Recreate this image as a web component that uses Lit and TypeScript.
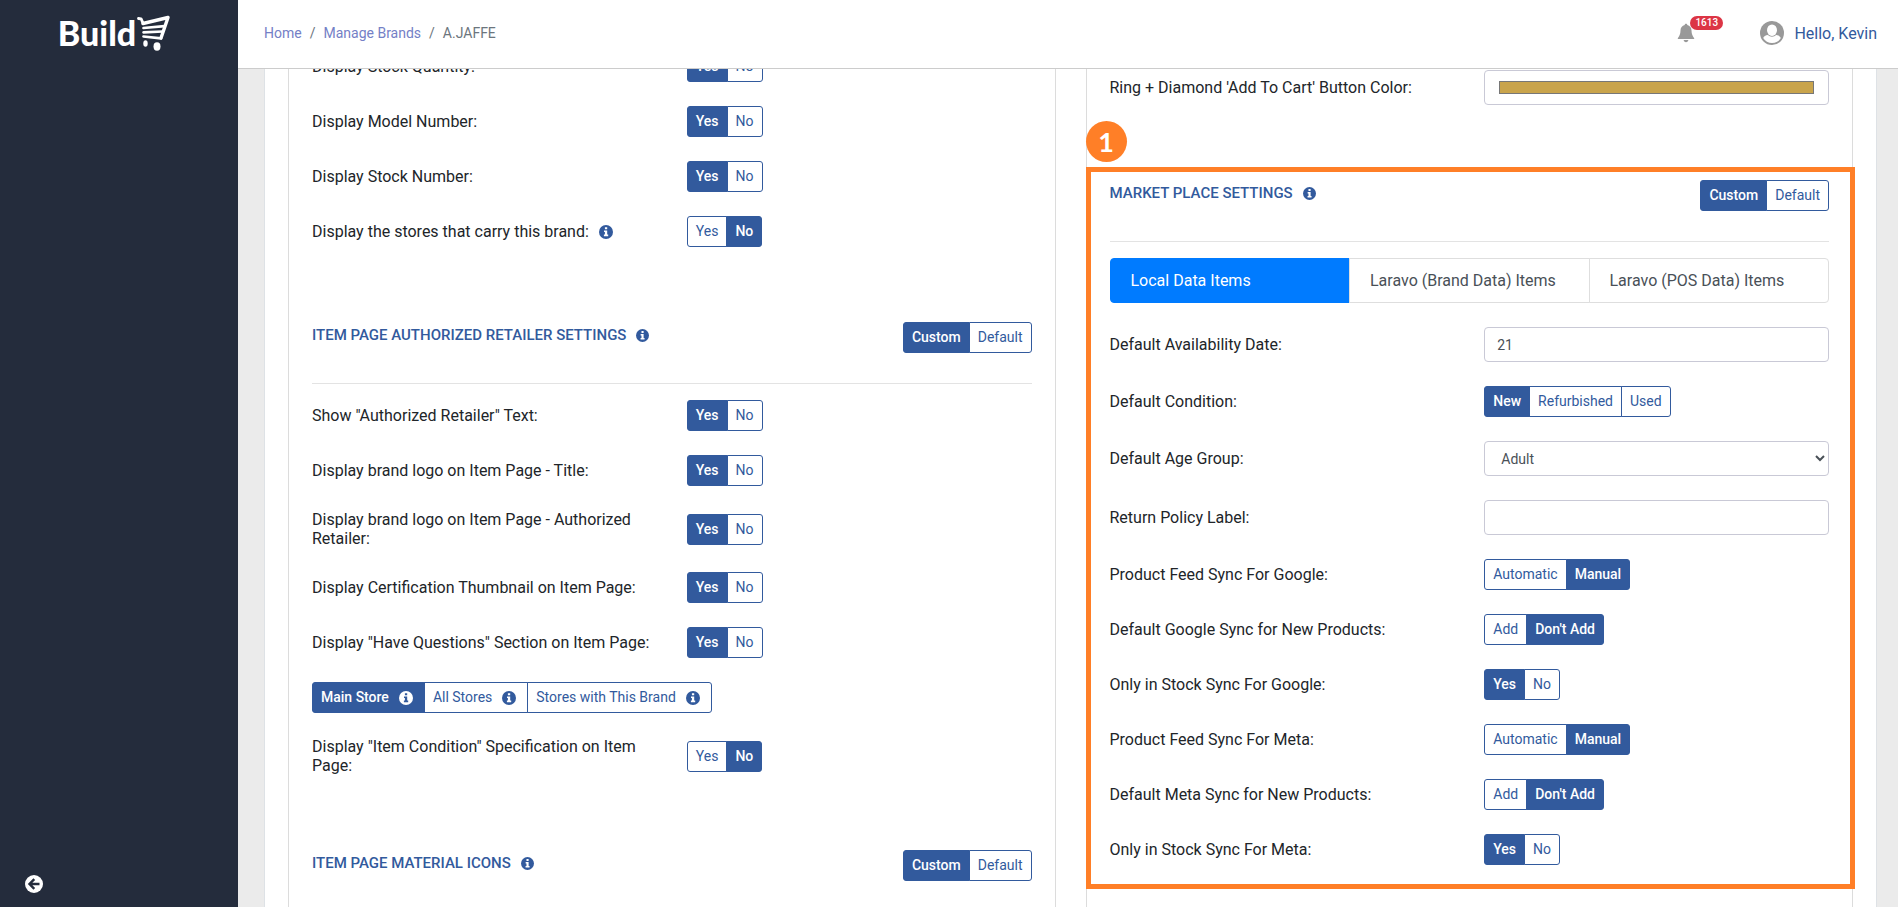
import { LitElement, html, css, nothing } from "lit";
import { customElement, property, state } from "lit/decorators.js";
import { classMap } from "lit/directives/class-map.js";

const infoIcon = html`<svg class="info" viewBox="0 0 14 14" aria-hidden="true">
  <circle cx="7" cy="7" r="7" fill="currentColor"></circle>
  <path class="cut" d="M5.9 2.2h2.3v2H5.9zM5 5.4h3.2v4.2h1v1.7H4.9V9.6h1V7.1H5z"></path>
</svg>`;

const iconStyles = css`
  .info { width: 14px; height: 14px; flex: none; }
  .cut { fill: #fff; }
`;

interface Option { label: string; info?: boolean }

@customElement("option-toggle")
export class OptionToggle extends LitElement {
  @property({ attribute: false }) options: Option[] = [];
  @property() label = "";
  @property({ type: Number }) selected = 0;

  static styles = [iconStyles, css`
    :host { display: flex; }
    .group { display: flex; }
    button {
      display: flex; align-items: center; gap: 10px;
      height: 31px; padding: 0 8px; margin: 0 0 0 -1px;
      border: 1px solid #325a9d; background: #fff; color: #325a9d;
      font: 400 14px/21px Roboto, sans-serif; cursor: pointer; white-space: nowrap;
    }
    button:first-child { margin-left: 0; border-radius: 3px 0 0 3px; }
    button:last-child { border-radius: 0 3px 3px 0; }
    .on { background: #325a9d; color: #fff; font-weight: 500; }
    .on .cut { fill: #325a9d; }
    .with-info { padding-right: 11px; }
  `];

  render() {
    return html`<div class="group" role="group" aria-label=${this.label}>
      ${this.options.map((o, i) => html`<button type="button"
        class=${classMap({ on: i === this.selected, "with-info": !!o.info })}
        aria-pressed=${i === this.selected}
        @click=${() => (this.selected = i)}>${o.label}${o.info ? infoIcon : nothing}</button>`)}
    </div>`;
  }
}

const opts = (...labels: string[]): Option[] => labels.map((label) => ({ label }));
const YES_NO = opts("Yes", "No");
const MODE = opts("Custom", "Default");
const SYNC = opts("Automatic", "Manual");
const ADD = opts("Add", "Don't Add");

@customElement("app-root")
export class AppRoot extends LitElement {
  @state() private tab = 0;

  static styles = [iconStyles, css`
    :host {
      display: grid; grid-template-columns: 238px minmax(0, 1fr);
      height: 100vh; overflow: hidden;
      font: 400 16px/19px Roboto, sans-serif; color: #212529; background: #ebebeb;
    }
    a { text-decoration: none; }
    .sidebar {
      display: flex; flex-direction: column; justify-content: space-between;
      background: #242c3c; color: #fff; padding: 12px 34px 13px 24px;
    }
    .logo { display: flex; align-items: center; justify-content: center; gap: 1px; color: #fff; font: 900 34px/42px Lato, sans-serif; }
    .cart { width: 33px; height: 36px; }
    .collapse { width: 20px; height: 20px; padding: 0; border: 0; background: none; cursor: pointer; }
    .collapse svg { display: block; width: 20px; height: 20px; }
    .body { display: flex; flex-direction: column; min-width: 0; min-height: 0; }
    header {
      display: flex; flex: none; align-items: center; justify-content: space-between;
      height: 66px; padding: 0 21px 2px 26px; background: #fff; border-bottom: 1px solid #ccc;
    }
    .crumbs { display: flex; gap: 8px; font-size: 14px; color: #6c757d; }
    .crumbs a { color: #7480c6; }
    .tools { display: flex; align-items: center; }
    .bell { position: relative; display: block; width: 18px; height: 20px; margin-right: 65px; padding: 0; border: 0; background: none; cursor: pointer; }
    .bell svg { display: block; width: 18px; height: 20px; }
    .count {
      position: absolute; left: 13px; top: -7px; padding: 0 5px; border-radius: 7px;
      background: #dc3545; color: #fff; font: 500 10px/14px Roboto, sans-serif;
    }
    .user { display: flex; align-items: center; gap: 10px; color: #325a9d; }
    .avatar { width: 24px; height: 24px; }
    main { flex: 1; min-height: 0; overflow: hidden; padding: 0 21px 0 26px; }
    .card {
      display: grid; grid-template-columns: repeat(2, minmax(0, 1fr)); gap: 30px;
      margin-top: -18px; padding: 0 23px; background: #fff;
      border: solid #dee2e6; border-width: 0 1px;
    }
    .panel { border: solid #dcdcdc; border-width: 0 1px; padding: 0 23px 60px; display: flex; flex-direction: column; gap: 75px; }
    .panel.late { padding-top: 19px; }
    section { display: flex; flex-direction: column; gap: 24px; }
    .row { display: grid; grid-template-columns: repeat(2, minmax(0, 1fr)); gap: 30px; align-items: center; }
    .label { display: flex; align-items: center; gap: 10px; }
    .head { display: flex; justify-content: space-between; align-items: flex-start; padding-bottom: 30px; margin-bottom: -8px; border-bottom: 1px solid #e3e3e3; }
    h2 { display: flex; align-items: center; gap: 10px; margin: 0; font-size: 15px; font-weight: 500; line-height: 26px; color: #325a9d; text-transform: uppercase; }
    h2 .info { width: 13px; height: 13px; }
    .label .info { color: #325a9d; }
    .field {
      box-sizing: border-box; width: 100%; height: 35px; padding: 6px 12px; margin: 0;
      border: 1px solid #c9c9d6; border-radius: 4px; background: #fff; color: #495057;
      font: 400 14px/21px Roboto, sans-serif;
    }
    .color::-webkit-color-swatch-wrapper { padding: 4px 2px; }
    .tabs { display: flex; }
    .tabs button {
      flex: 1 1 0; height: 45px; padding: 0 20px; border: 1px solid #dedede; margin-left: -1px;
      background: #fff; color: #495057; font: 400 16px/19px Roboto, sans-serif; text-align: left; cursor: pointer;
    }
    .tabs button:first-child { margin-left: 0; border-radius: 4px 0 0 4px; }
    .tabs button:last-child { border-radius: 0 4px 4px 0; }
    .tabs .active { background: #007bff; border-color: #007bff; color: #fff; }
    .market { position: relative; }
    .frame { position: absolute; inset: -13px -26px -24px -24px; border: 5px solid #ff7f27; pointer-events: none; }
    .step {
      position: absolute; left: -24px; top: -59px; width: 41px; height: 41px; border-radius: 50%;
      background: #ff7f27; color: #fff; font: 700 27px/41px Lato, sans-serif; text-align: center;
    }
  `];

  private row(label: string, options: Option[], selected = 0, info = false) {
    return html`<div class="row">
      <div class="label"><span>${label}</span>${info ? infoIcon : nothing}</div>
      <option-toggle .label=${label} .options=${options} .selected=${selected}></option-toggle>
    </div>`;
  }

  private head(title: string) {
    return html`<div class="head">
      <h2><span>${title}</span>${infoIcon}</h2>
      <option-toggle .label=${title} .options=${MODE}></option-toggle>
    </div>`;
  }

  render() {
    return html`
      <aside class="sidebar">
        <a class="logo" href="#"><span>Build</span>
          <svg class="cart" viewBox="0 0 33 36" aria-hidden="true">
            <g fill="none" stroke="#fff" stroke-linecap="round" stroke-linejoin="round">
              <path stroke-width="2.8" d="M1.500 3.500l2.600.3 2 4.600"></path>
              <path stroke-width="3.400" d="M6 8.500l25-6-7 20.500"></path>
              <path stroke-width="2.700" d="M6.500 13l21-1.800M6.500 17.300l19-.8M6.500 21.500l17.500 1.800"></path>
            </g>
            <ellipse cx="8.500" cy="28.500" rx="2.200" ry="3.200" fill="#fff"></ellipse>
            <ellipse cx="20" cy="31.500" rx="3.500" ry="4.200" fill="#fff"></ellipse>
          </svg>
        </a>
        <button class="collapse" type="button" aria-label="Collapse menu">
          <svg viewBox="0 0 20 20"><circle cx="10" cy="10" r="9" fill="#fff"></circle>
            <path d="M15.500 10H6M10.300 5.200L5.500 10l4.800 4.800" fill="none" stroke="#242c3c" stroke-width="2.400"></path></svg>
        </button>
      </aside>
      <div class="body">
        <header>
          <nav class="crumbs" aria-label="Breadcrumb">
            <a href="#">Home</a><span>/</span><a href="#">Manage Brands</a><span>/</span><span>A.JAFFE</span>
          </nav>
          <div class="tools">
            <button class="bell" type="button" aria-label="Notifications">
              <svg viewBox="0 0 18 20"><path fill="#999" d="M9 .8c.8 0 1.300.5 1.300 1.300 2.600.6 4.200 2.700 4.200 5.500 0 4 1.300 5.700 2.700 7.600v.8H.8v-.8c1.400-1.900 2.700-3.600 2.700-7.600 0-2.800 1.600-4.900 4.200-5.500C7.700 1.300 8.200.8 9 .8zM6.700 17h4.600c0 1.300-1 2.200-2.300 2.200S6.700 18.300 6.700 17z"></path></svg>
              <span class="count">1613</span>
            </button>
            <a class="user" href="#">
              <svg class="avatar" viewBox="0 0 24 24"><circle cx="12" cy="12" r="12" fill="#999"></circle>
                <ellipse cx="12" cy="9.200" rx="5" ry="5.800" fill="#fff"></ellipse>
                <path fill="#fff" d="M3.200 17c.8-1.700 2.300-2.600 4.600-2.900a6.300 6.300 0 0 0 8.400 0c2.300.3 3.800 1.200 4.600 2.900A10.200 10.200 0 0 1 3.200 17z"></path></svg>
              <span>Hello, Kevin</span>
            </a>
          </div>
        </header>
        <main>
          <div class="card">
            <div class="panel">
              <section>
                ${this.row("Display Stock Quantity:", YES_NO)}
                ${this.row("Display Model Number:", YES_NO)}
                ${this.row("Display Stock Number:", YES_NO)}
                ${this.row("Display the stores that carry this brand:", YES_NO, 1, true)}
              </section>
              <section>
                ${this.head("Item Page Authorized Retailer Settings")}
                ${this.row('Show "Authorized Retailer" Text:', YES_NO)}
                ${this.row("Display brand logo on Item Page - Title:", YES_NO)}
                ${this.row("Display brand logo on Item Page - Authorized Retailer:", YES_NO)}
                ${this.row("Display Certification Thumbnail on Item Page:", YES_NO)}
                ${this.row('Display "Have Questions" Section on Item Page:', YES_NO)}
                <option-toggle label="Stores" .options=${[
                  { label: "Main Store", info: true },
                  { label: "All Stores", info: true },
                  { label: "Stores with This Brand", info: true },
                ]}></option-toggle>
                ${this.row('Display "Item Condition" Specification on Item Page:', YES_NO, 1)}
              </section>
              <section>${this.head("Item Page Material Icons")}</section>
            </div>
            <div class="panel late">
              <section>
                <div class="row">
                  <label for="cart-color">Ring + Diamond 'Add To Cart' Button Color:</label>
                  <input id="cart-color" class="field color" type="color" value="#c9a44c">
                </div>
              </section>
              <section class="market">
                <span class="step">1</span>
                ${this.head("Market Place Settings")}
                <div class="tabs" role="tablist">
                  ${["Local Data Items", "Laravo (Brand Data) Items", "Laravo (POS Data) Items"].map((t, i) => html`
                    <button type="button" role="tab" aria-selected=${i === this.tab}
                      class=${classMap({ active: i === this.tab })} @click=${() => (this.tab = i)}>${t}</button>`)}
                </div>
                <div class="row">
                  <label for="days">Default Availability Date:</label>
                  <input id="days" class="field" type="text" value="21">
                </div>
                ${this.row("Default Condition:", opts("New", "Refurbished", "Used"))}
                <div class="row">
                  <label for="age">Default Age Group:</label>
                  <select id="age" class="field"><option>Adult</option><option>Kids</option></select>
                </div>
                <div class="row">
                  <label for="policy">Return Policy Label:</label>
                  <input id="policy" class="field" type="text">
                </div>
                ${this.row("Product Feed Sync For Google:", SYNC, 1)}
                ${this.row("Default Google Sync for New Products:", ADD, 1)}
                ${this.row("Only in Stock Sync For Google:", YES_NO)}
                ${this.row("Product Feed Sync For Meta:", SYNC, 1)}
                ${this.row("Default Meta Sync for New Products:", ADD, 1)}
                ${this.row("Only in Stock Sync For Meta:", YES_NO)}
                <div class="frame"></div>
              </section>
            </div>
          </div>
        </main>
      </div>`;
  }
}
